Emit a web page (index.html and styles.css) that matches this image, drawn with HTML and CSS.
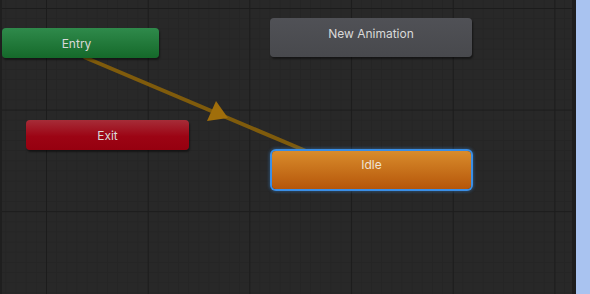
FILE: index.html
```html
<!DOCTYPE html>
<html>
<head>
  <title>Animator</title>
  <link rel="stylesheet" href="styles.css">
</head>
<body>
  <div class="window">
    <div class="graph">
      <!-- transition Entry -> Idle -->
      <svg class="links" width="572" height="294" viewBox="0 0 572 294">
        <line x1="84" y1="57" x2="306" y2="151" stroke="#7f5b0c" stroke-width="4"/>
        <polygon points="228,118 216,101 207,121" fill="#a06e0b"/>
      </svg>

      <div class="node entry">Entry</div>
      <div class="node state anim">New Animation</div>
      <div class="node exit">Exit</div>
      <div class="node state idle">Idle</div>
    </div>
    <div class="edge"></div>
    <div class="side"></div>
  </div>
</body>
</html>
```

FILE: styles.css
```css
html, body {
  margin: 0;
  padding: 0;
}

body {
  width: 590px;
  height: 294px;
  overflow: hidden;
  font-family: Inter, "Noto Sans", sans-serif;
  font-size: 12px;
}

.window {
  display: flex;
  height: 294px;
}

.graph {
  position: relative;
  flex: 0 0 572px;
  height: 294px;
  overflow: hidden;
  background-color: #282828;
  background-image:
    linear-gradient(to right, #1c1c1c 0 1px, transparent 1px),
    linear-gradient(to bottom, #1c1c1c 0 1px, transparent 1px),
    linear-gradient(to right, #252525 0 1px, transparent 1px),
    linear-gradient(to bottom, #252525 0 1px, transparent 1px);
  background-size: 101.7px 101.6px, 101.7px 101.6px, 10.17px 10.16px, 10.17px 10.16px;
  background-position: 46px 8px, 46px 8px, 46px 8px, 46px 8px;
}

.graph::before {
  content: "";
  position: absolute;
  left: 0;
  top: 0;
  bottom: 0;
  width: 2px;
  background: #1f1f1f;
}

.edge {
  flex: 0 0 4px;
  background: #1d1d1d;
}

.side {
  flex: 1;
  background: #a9c3f0;
}

.links {
  position: absolute;
  left: 0;
  top: 0;
}

.node {
  position: absolute;
  box-sizing: border-box;
  display: flex;
  justify-content: center;
  color: #d9d9d9;
  border-radius: 4px;
  box-shadow: 1px 2px 2px rgba(0, 0, 0, 0.45);
}

.entry {
  left: 2px;
  top: 28px;
  width: 157px;
  height: 30px;
  align-items: center;
  padding-right: 8px;
  background: linear-gradient(to bottom, #2f8a4b, #15692a);
}

.exit {
  left: 26px;
  top: 120px;
  width: 163px;
  height: 30px;
  align-items: center;
  background: linear-gradient(to bottom, #a62d38 0%, #9c0414 55%, #96000f);
}

.state {
  width: 202px;
  height: 39px;
  padding-top: 8px;
  line-height: 16px;
}

.anim {
  left: 270px;
  top: 18px;
  background: linear-gradient(to bottom, #505156, #48494d);
}

.idle {
  left: 272px;
  top: 151px;
  width: 199px;
  height: 38px;
  padding-top: 6px;
  color: #efe4d6;
  background: linear-gradient(to bottom, #d98c2c, #b5560a);
  box-shadow: 0 0 0 2px #3a8ee6, 0 0 3px 3px rgba(58, 142, 230, 0.35);
}
```
